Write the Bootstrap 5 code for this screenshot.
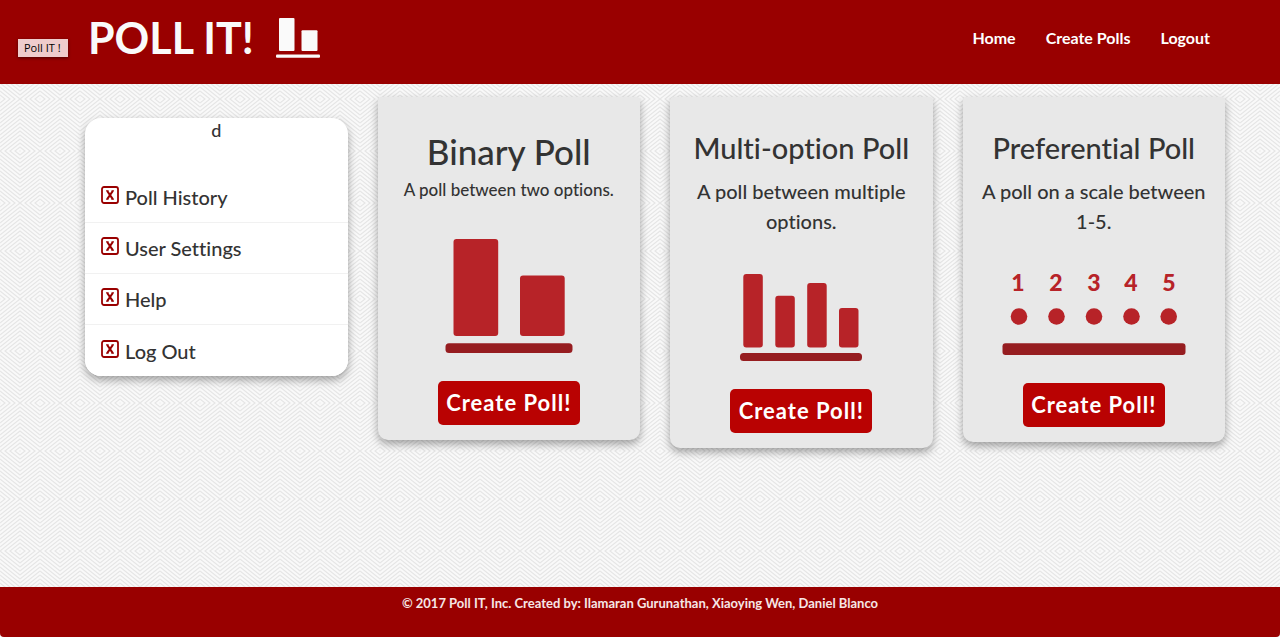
<!DOCTYPE html>
<html lang="en">
<head>
<meta charset="utf-8">
<meta name="viewport" content="width=device-width, initial-scale=1">
<title>Poll IT!</title>
<link href="https://cdn.jsdelivr.net/npm/bootstrap@5.3.0/dist/css/bootstrap.min.css" rel="stylesheet">
<style>
  body {
    font-family: Lato, "Open Sans", sans-serif;
    font-weight: 500;
    font-variant-ligatures: none;
    color: #333;
    background-color: #f9f9f9;
    /* woven diamond pattern: bands of chevrons with alternating direction */
    background-image: url("data:image/svg+xml,%3Csvg xmlns='http://www.w3.org/2000/svg' width='40' height='200'%3E%3Cdefs%3E%3Cpattern id='a' width='40' height='4' patternUnits='userSpaceOnUse'%3E%3Cpath fill='none' stroke='%23e6e6e6' stroke-width='1.2' d='M0 0L20 -16L40 0M0 4L20 -12L40 4M0 8L20 -8L40 8M0 12L20 -4L40 12M0 16L20 0L40 16M0 20L20 4L40 20'/%3E%3C/pattern%3E%3Cpattern id='b' width='40' height='4' patternUnits='userSpaceOnUse'%3E%3Cpath fill='none' stroke='%23e6e6e6' stroke-width='1.2' d='M0 0L20 16L40 0M0 4L20 20L40 4M0 -4L20 12L40 -4M0 -8L20 8L40 -8M0 -12L20 4L40 -12M0 -16L20 0L40 -16'/%3E%3C/pattern%3E%3C/defs%3E%3Cpath fill='url(%23a)' d='M0 0h40v52H0zM0 104h40v48H0z'/%3E%3Cpath fill='url(%23b)' d='M0 52h40v52H0zM0 152h40v48H0z'/%3E%3C/svg%3E");
    background-position: 0 99px;
  }
  .site-header { background: #900; min-height: 84px; padding: 0 70px 0 88px; }
  .brand-link { gap: 22px; }
  .brand-word { font-size: 43px; line-height: 50px; font-weight: 700; color: #fafafa; }
  .site-links { gap: 30px; margin-bottom: 8px; }
  .site-links a { font-size: 16px; line-height: 24px; font-weight: 700; color: #fff; text-decoration: none; }
  .brand-tip {
    position: absolute; left: 18px; top: 39px;
    padding: 0 7px 0 6px; font: 11px/18px "Open Sans", sans-serif;
    color: #000; background: #efcccc; box-shadow: 0 1px 3px rgba(0,0,0,.5);
  }
  .page-wrap { max-width: 1170px; padding: 13px 0 40px 30px; }
  .page-wrap .row { --bs-gutter-x: 30px; --bs-gutter-y: 20px; }
  .side-menu { margin-top: 21px; border-radius: 16px; background: #fff; overflow: hidden; }
  .raised { box-shadow: 0 4px 8px rgba(0,0,0,.35); }
  .user-line { font-size: 18px; line-height: 24px; height: 54px; }
  .side-menu .list-group-item {
    display: flex; align-items: center; gap: 6px; padding: 0 16px;
    height: 51px; font-size: 20px; line-height: 30px; color: #333; border-color: #f1f1f1;
  }
  .side-menu .list-group-item svg { margin-bottom: 4px; }
  .poll-card { background: #e8e8e8; border-radius: 4px 4px 10px 10px; padding: 34px 12px 15px; text-align: center; }
  .poll-card h2 { font-size: 29px; line-height: 34px; margin-bottom: 11px; font-weight: 500; }
  .poll-card p { font-size: 20px; line-height: 30px; margin-bottom: 37px; }
  .poll-card.wide-title h2 { font-size: 35px; line-height: 40px; margin-bottom: 6px; }
  .poll-card.wide-title p { font-size: 17px; line-height: 25px; }
  .poll-card svg { display: block; margin: 0 auto 28px; overflow: visible; }
  .btn-poll {
    background: #b90202; color: #fff; border: 0; border-radius: 5px;
    padding: 7px 6px; font-size: 22px; line-height: 30px; font-weight: 700; letter-spacing: 1px; width: 142px; white-space: nowrap;
  }
  .btn-poll:hover { background: #900; color: #fff; }
  .site-footer { background: #900; color: #f6e6e6; min-height: 50px; padding: 4px 12px; font-size: 13px; line-height: 24px; font-weight: 700; border-radius: 0 0 4px 4px; }
</style>
</head>
<body class="d-flex flex-column min-vh-100">

<svg class="d-none" aria-hidden="true">
  <symbol id="box-x" viewBox="0 0 18 18">
    <rect x="1" y="1" width="16" height="16" rx="2" fill="none" stroke="#900" stroke-width="1.8"/>
    <path d="M6.2 5 11.8 13.2M11.8 5 6.2 13.2" fill="none" stroke="#900" stroke-width="2.1"/>
    <path d="M5 4.8h2.6M10.6 4.8H13M5 13.2h2.4M10.4 13.2H13" stroke="#900" stroke-width="1"/>
  </symbol>
</svg>

<header class="site-header position-relative d-flex flex-wrap align-items-center justify-content-between">
  <a href="#" class="brand-link d-flex align-items-center text-decoration-none mb-2" aria-label="Poll IT! home">
    <span class="brand-word">POLL IT!</span>
    <svg width="44" height="40" viewBox="0 0 44 40" fill="#fafafa" aria-hidden="true">
      <rect x="3" y="0" width="15.500" height="33" rx="1"/>
      <rect x="25.500" y="12.300" width="16" height="20.700" rx="1"/>
      <rect x="0" y="36.500" width="44" height="3.300" rx="1"/>
    </svg>
  </a>
  <span class="brand-tip" role="tooltip">Poll IT !</span>
  <nav class="site-links d-flex">
    <a href="#">Home</a>
    <a href="#">Create Polls</a>
    <a href="#">Logout</a>
  </nav>
</header>

<main class="page-wrap container flex-grow-1">
  <div class="row align-items-start mt-0">
    <div class="col-12 col-sm-6 col-lg-3 mt-0 mb-4">
      <div class="side-menu raised">
        <div class="user-line text-center">d</div>
        <div class="list-group list-group-flush">
          <a href="#" class="list-group-item"><svg width="18" height="18"><use href="#box-x"/></svg>Poll History</a>
          <a href="#" class="list-group-item"><svg width="18" height="18"><use href="#box-x"/></svg>User Settings</a>
          <a href="#" class="list-group-item"><svg width="18" height="18"><use href="#box-x"/></svg>Help</a>
          <a href="#" class="list-group-item"><svg width="18" height="18"><use href="#box-x"/></svg>Log Out</a>
        </div>
      </div>
    </div>

    <div class="col-12 col-sm-6 col-lg-3 mt-0 mb-4">
      <section class="poll-card wide-title raised">
        <h2>Binary Poll</h2>
        <p>A poll between two options.</p>
        <svg width="128" height="114" viewBox="0 0 128 114" fill="#b72328" aria-hidden="true">
          <rect x="8.500" y="0" width="44.700" height="97" rx="3"/>
          <rect x="75" y="36.500" width="44.700" height="60.500" rx="3"/>
          <rect x="0.500" y="104.300" width="127" height="9.700" rx="3.500" fill="#961d20"/>
        </svg>
        <button type="button" class="btn btn-poll">Create Poll!</button>
      </section>
    </div>

    <div class="col-12 col-sm-6 col-lg-3 mt-0 mb-4">
      <section class="poll-card raised">
        <h2>Multi-option Poll</h2>
        <p>A poll between multiple options.</p>
        <svg width="122" height="88" viewBox="0 0 122 88" fill="#b72328" aria-hidden="true">
          <rect x="3.300" y="1" width="19.500" height="73.500" rx="3"/>
          <rect x="35.300" y="22.700" width="19.500" height="51.800" rx="3"/>
          <rect x="67.200" y="10" width="19.500" height="64.500" rx="3"/>
          <rect x="99" y="35" width="19.500" height="39.500" rx="3"/>
          <rect x="0" y="80" width="122" height="8" rx="3.500" fill="#961d20"/>
        </svg>
        <button type="button" class="btn btn-poll">Create Poll!</button>
      </section>
    </div>

    <div class="col-12 col-sm-6 col-lg-3 mt-0 mb-4">
      <section class="poll-card raised">
        <h2>Preferential Poll</h2>
        <p>A poll on a scale between 1-5.</p>
        <svg width="184" height="82" viewBox="0 0 184 82" fill="#b72328" aria-label="Scale from 1 to 5">
          <g font-family="Lato, sans-serif" font-size="23" font-weight="900" text-anchor="middle">
            <text x="16" y="18">1</text><text x="54" y="18">2</text><text x="92" y="18">3</text><text x="129" y="18">4</text><text x="167" y="18">5</text>
          </g>
          <circle cx="17" cy="43.500" r="8.300"/><circle cx="54.500" cy="43.500" r="8.300"/><circle cx="92" cy="43.500" r="8.300"/><circle cx="129.500" cy="43.500" r="8.300"/><circle cx="166.700" cy="43.500" r="8.300"/>
          <rect x="0.500" y="70.300" width="183" height="11.700" rx="3" fill="#961d20"/>
        </svg>
        <button type="button" class="btn btn-poll">Create Poll!</button>
      </section>
    </div>
  </div>
</main>

<footer class="site-footer text-center">© 2017 Poll IT, Inc. Created by: Ilamaran Gurunathan, Xiaoying Wen, Daniel Blanco</footer>

<script src="https://cdn.jsdelivr.net/npm/bootstrap@5.3.0/dist/js/bootstrap.bundle.min.js"></script>
</body>
</html>
